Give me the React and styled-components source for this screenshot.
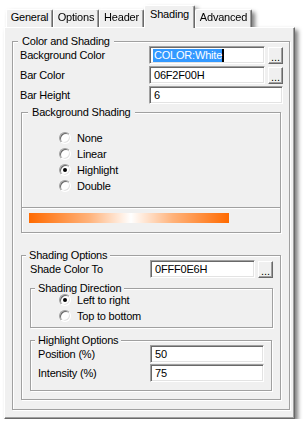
import React from "react";
import styled, { createGlobalStyle } from "styled-components";

const GlobalStyle = createGlobalStyle`
  html, body {
    margin: 0;
    padding: 0;
    background: #ffffff;
  }
  body {
    font-family: "Liberation Sans", Arial, sans-serif;
    font-size: 11px;
    letter-spacing: -0.2px;
    color: #000000;
  }
  * {
    box-sizing: border-box;
  }
`;

const Dialog = styled.div`
  width: 291px;
  margin: 5px 0 0 4px;
  filter: drop-shadow(3px 3px 2px rgba(0, 0, 0, 0.5));
`;

const TabRow = styled.div`
  display: flex;
  align-items: flex-end;
  height: 22px;
  padding-left: 2px;
`;

const Tab = styled.div`
  position: relative;
  z-index: ${(p) => (p.$active ? 1 : 0)};
  width: ${(p) => p.$width}px;
  height: ${(p) => (p.$active ? 23 : 18)}px;
  margin-bottom: ${(p) => (p.$active ? -1 : 0)}px;
  padding-top: ${(p) => (p.$active ? 2 : 1)}px;
  text-align: center;
  line-height: 13px;
  background: #f0f0f0;
  border-top: 1px solid #ffffff;
  border-left: 1px solid #ffffff;
  border-right: 1px solid #696969;
  border-radius: 2px 2px 0 0;
  box-shadow: inset -1px 0 #a0a0a0;
`;

const Panel = styled.div`
  height: 392px;
  padding: 13px 4px 0 7px;
  background: #f0f0f0;
  border: 1px solid;
  border-color: #ffffff #696969 #696969 #ffffff;
  box-shadow: inset -1px -1px #a0a0a0;
`;

const Group = styled.div`
  margin: ${(p) => p.$margin || "0"};
  padding-bottom: ${(p) => p.$pb || 0}px;
  border: 1px solid #a0a0a0;
  box-shadow: inset 1px 1px #ffffff, 1px 1px #ffffff;
`;

const Legend = styled.div`
  display: table;
  margin: -7px 0 ${(p) => p.$after - 6}px ${(p) => p.$indent}px;
  padding: 0 ${(p) => p.$pad}px;
  line-height: 13px;
  background: #f0f0f0;
`;

const Inner = styled.div`
  padding: 0 ${(p) => p.$pr}px 0 ${(p) => p.$pl}px;
`;

const Rows = styled.div`
  display: flex;
  flex-direction: column;
  gap: ${(p) => p.$gap}px;
`;

const Row = styled.div`
  display: flex;
  align-items: center;
  height: 18px;
`;

const Label = styled.div`
  flex: 0 0 ${(p) => p.$width}px;
  line-height: 13px;
`;

const Field = styled.div`
  flex: 1;
  height: 18px;
  padding-left: 4px;
  line-height: 16px;
  background: #ffffff;
  border: 1px solid;
  border-color: #a0a0a0 #ffffff #ffffff #a0a0a0;
  box-shadow: inset 1px 1px #696969, inset -1px -1px #e3e3e3;
  white-space: nowrap;
  overflow: hidden;
`;

const Selected = styled.span`
  display: inline-block;
  margin-left: -1px;
  padding: 0 0 0 1px;
  line-height: 13px;
  background: #3399ff;
  color: #ffffff;
  border-right: 2px solid #000000;
`;

const DotsButton = styled.div`
  flex: 0 0 15px;
  height: 17px;
  margin-left: 3px;
  padding-top: 4px;
  text-align: center;
  line-height: 11px;
  letter-spacing: 0;
  background: #f0f0f0;
  border: 1px solid;
  border-color: #ffffff #696969 #696969 #ffffff;
  box-shadow: inset -1px -1px #a0a0a0;
`;

const RadioList = styled.div`
  display: flex;
  flex-direction: column;
  padding-left: ${(p) => p.$indent}px;
`;

const RadioRow = styled.div`
  display: flex;
  align-items: center;
  height: 16px;
  line-height: 13px;
`;

const RadioDot = styled.span`
  position: relative;
  flex: 0 0 12px;
  height: 12px;
  margin-right: 6px;
  border-radius: 50%;
  background: #ffffff;
  border: 1px solid;
  border-color: #a0a0a0 #ffffff #ffffff #a0a0a0;
  box-shadow: inset 1px 1px #696969, inset -1px -1px #e3e3e3;

  &::after {
    content: "";
    display: ${(p) => (p.$checked ? "block" : "none")};
    position: absolute;
    left: 3px;
    top: 3px;
    width: 4px;
    height: 4px;
    border-radius: 50%;
    background: #000000;
  }
`;

const Separator = styled.div`
  height: 2px;
  margin-top: 13px;
  border-top: 1px solid #a0a0a0;
  border-bottom: 1px solid #ffffff;
`;

const ShadeBar = styled.div`
  width: 200px;
  height: 10px;
  margin: 4px 0 0 7px;
  background: linear-gradient(
    to right,
    #ff6a00 0%,
    #ffb27a 30%,
    #ffffff 51%,
    #ffb27a 72%,
    #ff6a00 100%
  );
`;

const tabs = [
  { name: "General", width: 47 },
  { name: "Options", width: 46 },
  { name: "Header", width: 45 },
  { name: "Shading", width: 51, active: true },
  { name: "Advanced", width: 57 },
];

const Radio = ({ checked, children }) => (
  <RadioRow>
    <RadioDot $checked={checked} />
    {children}
  </RadioRow>
);

export default function App() {
  return (
    <>
      <GlobalStyle />
      <Dialog>
        <TabRow>
          {tabs.map((t) => (
            <Tab key={t.name} $width={t.width} $active={t.active}>
              {t.name}
            </Tab>
          ))}
        </TabRow>
        <Panel>
          <Group $pb={9}>
            <Legend $indent={5} $pad={4} $after={4}>
              Color and Shading
            </Legend>
            <Inner $pl={7} $pr={6}>
              <Rows $gap={2}>
                <Row>
                  <Label $width={129}>Background Color</Label>
                  <Field>
                    <Selected>COLOR:White</Selected>
                  </Field>
                  <DotsButton>...</DotsButton>
                </Row>
                <Row>
                  <Label $width={129}>Bar Color</Label>
                  <Field>06F2F00H</Field>
                  <DotsButton>...</DotsButton>
                </Row>
                <Row>
                  <Label $width={129}>Bar Height</Label>
                  <Field>6</Field>
                </Row>
              </Rows>

              <Group $margin="8px 2px 0 1px" $pb={9}>
                <Legend $indent={6} $pad={4} $after={17}>
                  Background Shading
                </Legend>
                <RadioList $indent={37}>
                  <Radio>None</Radio>
                  <Radio>Linear</Radio>
                  <Radio checked>Highlight</Radio>
                  <Radio>Double</Radio>
                </RadioList>
                <Separator />
                <ShadeBar />
              </Group>

              <Group $margin="22px 2px 0 1px" $pb={8}>
                <Legend $indent={4} $pad={3} $after={4}>
                  Shading Options
                </Legend>
                <Inner $pl={8} $pr={7}>
                  <Row>
                    <Label $width={120}>Shade Color To</Label>
                    <Field>0FFF0E6H</Field>
                    <DotsButton>...</DotsButton>
                  </Row>

                  <Group $margin="10px 0 0 0" $pb={3}>
                    <Legend $indent={4} $pad={3} $after={3}>
                      Shading Direction
                    </Legend>
                    <RadioList $indent={28}>
                      <Radio checked>Left to right</Radio>
                      <Radio>Top to bottom</Radio>
                    </RadioList>
                  </Group>

                  <Group $margin="12px 1px 0 0" $pb={8}>
                    <Legend $indent={4} $pad={3} $after={4}>
                      Highlight Options
                    </Legend>
                    <Inner $pl={7} $pr={7}>
                      <Rows $gap={1}>
                        <Row>
                          <Label $width={112}>Position (%)</Label>
                          <Field>50</Field>
                        </Row>
                        <Row>
                          <Label $width={112}>Intensity (%)</Label>
                          <Field>75</Field>
                        </Row>
                      </Rows>
                    </Inner>
                  </Group>
                </Inner>
              </Group>
            </Inner>
          </Group>
        </Panel>
      </Dialog>
    </>
  );
}
